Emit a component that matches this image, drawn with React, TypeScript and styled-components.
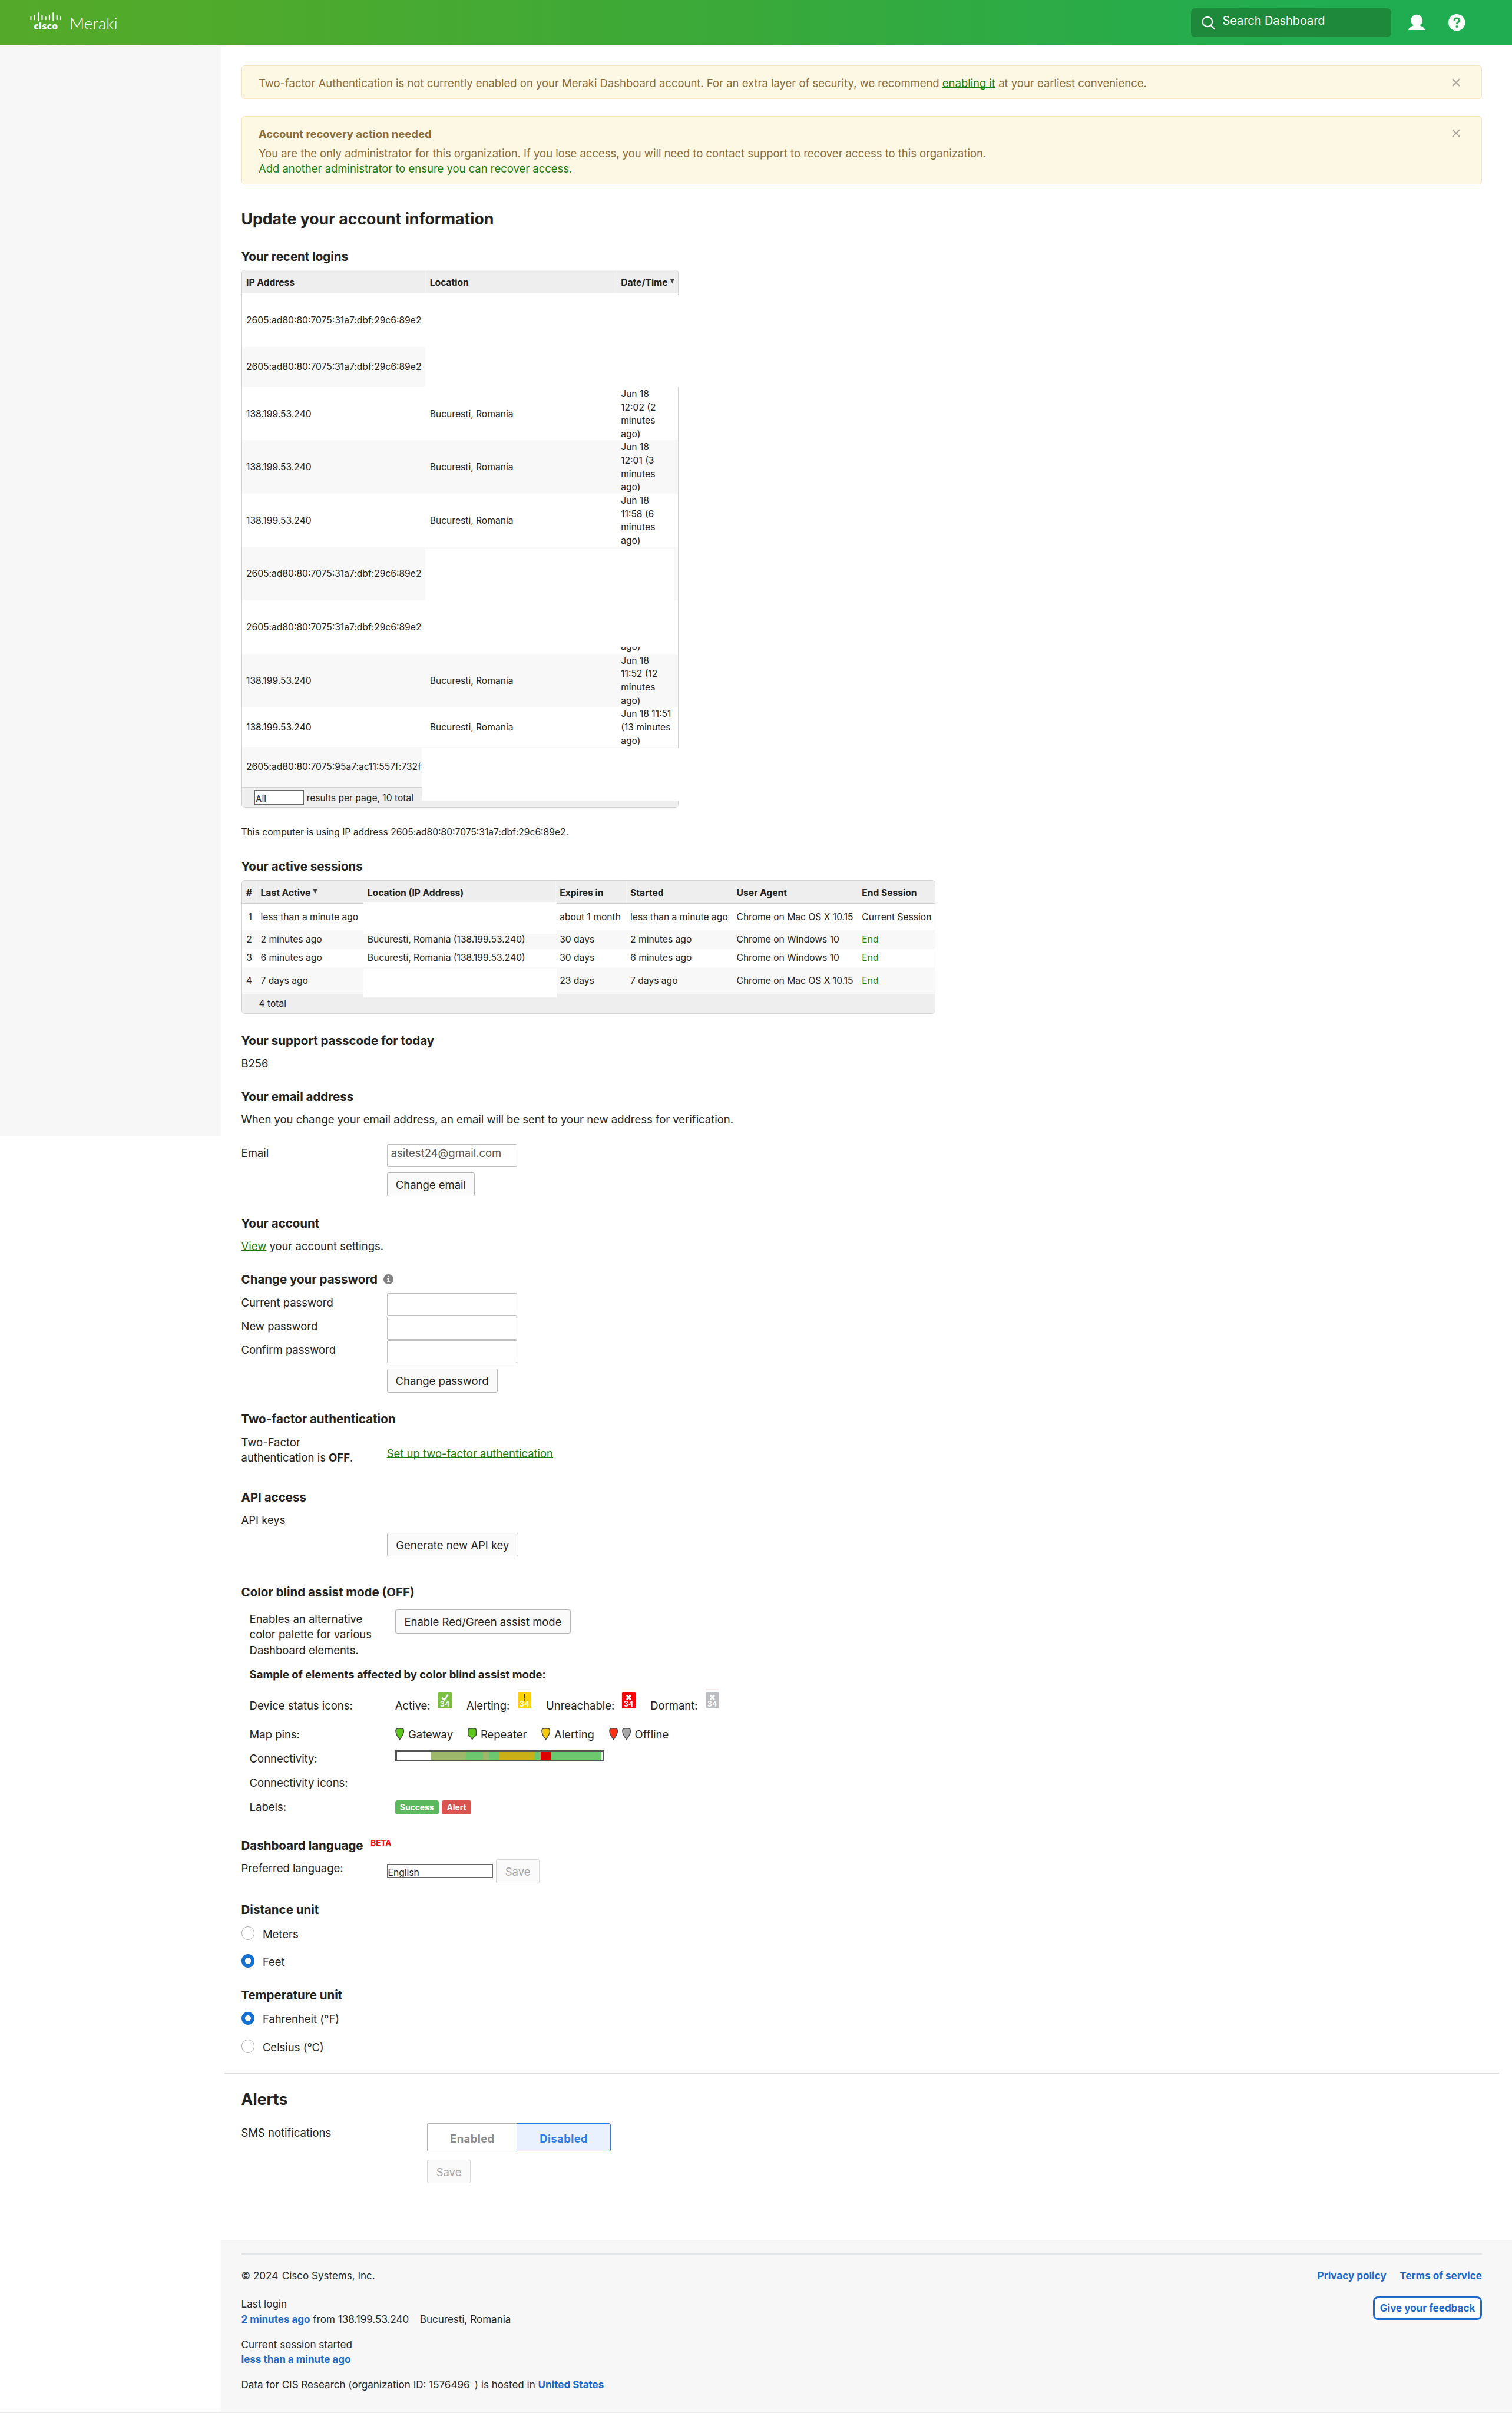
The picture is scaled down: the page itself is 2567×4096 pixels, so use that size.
import React from "react";
import styled, { createGlobalStyle, css } from "styled-components";

const SCALE = 2567 / 1807;
const u = (n: number) => `${+(n * SCALE).toFixed(3)}px`;

const INK = "#222222";
const LINK = "#1b7d0c";
const BLUE = "#1d69cc";

const GlobalStyle = createGlobalStyle`
  * { box-sizing: border-box; }
  html, body { margin: 0; padding: 0; background: #ffffff; }
  body {
    font-family: Inter, "Liberation Sans", sans-serif;
    font-size: ${u(13)};
    line-height: ${u(18.6)};
    color: ${INK};
    overflow: hidden;
  }
  h1, h2, h3, p { margin: 0; }
  button, input { font-family: inherit; margin: 0; outline: none; }
`;

const Page = styled.div`
  width: 2567px;
  height: 4096px;
  display: flex;
  flex-direction: column;
  overflow: hidden;
  border-bottom: 1px solid #ececec;
`;

/* ---------- top bar ---------- */

const TopBar = styled.header`
  height: ${u(54)};
  flex: none;
  display: flex;
  align-items: flex-start;
  justify-content: space-between;
  background: linear-gradient(90deg, #54a929 0%, #4faa2c 15%, #39a93a 50%, #20ad52 88%, #20ad52 100%);
  color: #ffffff;
`;

const Brand = styled.div`
  display: flex;
  padding-left: ${u(36)};
`;

const CiscoMark = styled.div`
  width: ${u(37.6)};
  margin-top: ${u(15)};
  display: flex;
  flex-direction: column;
  align-items: center;
  svg { display: block; width: ${u(37.6)}; height: ${u(10.6)}; }
`;

const CiscoWord = styled.span`
  font-family: "Open Sans", sans-serif;
  font-weight: 800;
  font-size: ${u(11)};
  line-height: ${u(12)};
  height: ${u(12)};
  margin-top: ${u(-0.3)};
  letter-spacing: ${u(0.2)};
`;

const MerakiWord = styled.span`
  font-family: Lato, sans-serif;
  font-weight: 300;
  font-size: ${u(19.6)};
  line-height: ${u(24)};
  margin-top: ${u(16.2)};
  margin-left: ${u(9.4)};
`;

const TopActions = styled.div`
  display: flex;
  padding-right: ${u(56)};
`;

const SearchBox = styled.div`
  width: ${u(240)};
  height: ${u(34)};
  margin-top: ${u(10)};
  border-radius: ${u(5)};
  background: #1f893b;
  display: flex;
  align-items: flex-start;
  svg { width: ${u(17)}; height: ${u(17)}; margin: ${u(9)} ${u(8)} 0 ${u(13)}; }
`;

const SearchText = styled.span`
  font-size: ${u(14)};
  line-height: ${u(20)};
  margin-top: ${u(5.1)};
`;

const TopIcon = styled.svg<{ $ml: number }>`
  width: ${u(20)};
  height: ${u(20)};
  margin-top: ${u(17)};
  margin-left: ${(p) => u(p.$ml)};
`;

/* ---------- frame ---------- */

const Body = styled.div`
  flex: 1;
  min-height: 0;
  display: flex;
  align-items: flex-start;
`;

const Sidebar = styled.aside`
  width: ${u(264)};
  height: ${u(1304)};
  flex: none;
  background: #f7f7f7;
`;

const Main = styled.main`
  flex: 1;
  min-width: 0;
  height: 100%;
  display: flex;
  flex-direction: column;
`;

const Content = styled.div`
  flex: none;
  padding: ${u(24.3)} ${u(36)} 0 ${u(24.3)};
  height: ${u(2622.7)};
`;

/* ---------- alerts ---------- */

const Alert = styled.div<{ $h: number; $mb?: number }>`
  height: ${(p) => u(p.$h)};
  margin-bottom: ${(p) => u(p.$mb ?? 0)};
  padding: ${u(11.2)} ${u(25)} 0 ${u(20)};
  border: 1px solid #f9e6c0;
  border-radius: ${u(4)};
  background: #fdf8e3;
  color: #8a6d3b;
  display: flex;
  justify-content: space-between;
  align-items: flex-start;
`;

const AlertTitle = styled.div`
  font-weight: 700;
  margin-bottom: ${u(4.5)};
`;

const Close = styled.svg`
  width: ${u(10)};
  height: ${u(10)};
  margin-top: ${u(3.6)};
`;

/* ---------- typography ---------- */

const Title = styled.h1<{ $mt: number }>`
  font-size: ${u(18.75)};
  line-height: ${u(25)};
  font-weight: 700;
  margin-top: ${(p) => u(p.$mt)};
`;

const Heading = styled.h3<{ $mt: number }>`
  display: flex;
  align-items: center;
  height: ${u(20)};
  padding-top: ${u(0.8)};
  font-size: ${u(14.43)};
  line-height: ${u(19.2)};
  font-weight: 700;
  margin-top: ${(p) => u(p.$mt)};
`;

const Text = styled.p<{ $mt?: number; $small?: boolean; $bold?: boolean }>`
  margin-top: ${(p) => u(p.$mt ?? 0)};
  white-space: nowrap;
  ${(p) => p.$small && css`font-size: ${u(11)}; line-height: ${u(16)};`}
  ${(p) => p.$bold && css`font-weight: 700;`}
`;

const Link = styled.a`
  color: ${LINK};
  text-decoration: underline;
  text-decoration-thickness: ${u(1)};
  text-underline-offset: 0px;
  text-decoration-skip-ink: none;
`;

const Beta = styled.span`
  color: #ff0000;
  font-size: ${u(9.5)};
  line-height: ${u(12)};
  margin: ${u(-6)} 0 0 ${u(9)};
`;

const InfoDot = styled.svg`
  width: ${u(12)};
  height: ${u(12)};
  margin-left: ${u(7.4)};
`;

/* ---------- tables ---------- */

const TableWrap = styled.div<{ $w: number; $mt: number }>`
  position: relative;
  width: ${(p) => u(p.$w)};
  margin-top: ${(p) => u(p.$mt)};
`;

const Table = styled.div`
  border: 1px solid #d2d2d2;
  border-radius: ${u(4)};
  overflow: hidden;
  font-size: ${u(11)};
  line-height: ${u(15.94)};
`;

const LOGIN_COLS = `${u(219.4)} ${u(228.4)} 1fr`;
const SESSION_COLS = `${u(17.2)} ${u(127.6)} ${u(229.8)} ${u(84.4)} ${u(127)} ${u(149.8)} 1fr`;

const Cell = styled.div<{ $end?: boolean; $bottom?: boolean; $line?: boolean }>`
  padding: ${u(0.8)} 0 0 ${u(5.3)};
  white-space: nowrap;
  ${(p) => p.$end && css`padding: ${u(0.8)} ${u(5)} 0 0; text-align: right;`}
  ${(p) => p.$bottom && css`align-self: end;`}
  ${(p) => p.$line && css`height: 100%; display: flex; align-items: center; border-left: 1px solid #f4f4f4; padding-left: ${u(4.6)};`}
`;

const Row = styled.div<{ $cols: string; $h: number; $alt?: boolean; $head?: boolean }>`
  display: grid;
  grid-template-columns: ${(p) => p.$cols};
  align-items: center;
  height: ${(p) => u(p.$h)};
  background: ${(p) => (p.$head ? "#eeeeee" : p.$alt ? "#f8f8f8" : "#ffffff")};
  ${(p) => p.$head && css`
    font-weight: 700;
    border-bottom: 1px solid #d2d2d2;
    ${Cell} { padding-top: ${u(2.6)}; }
  `}
`;

const Stamp = styled(Cell)`
  padding-top: ${u(0.8)};
  white-space: pre-line;
`;

const SortArrow = styled.i`
  width: ${u(5.2)};
  height: ${u(5.8)};
  background: #444444;
  clip-path: polygon(0 0, 100% 0, 50% 100%);
  margin: ${u(-4)} 0 0 ${u(2.8)};
`;

const TableFoot = styled.div<{ $h: number; $pl: number }>`
  display: flex;
  align-items: center;
  height: ${(p) => u(p.$h)};
  padding-left: ${(p) => u(p.$pl)};
  background: #eeeeee;
  border-top: 1px solid #d2d2d2;
`;

/* White block laid over table content. */
const Mask = styled.div<{ $x: number; $y: number; $w: number; $h: number }>`
  position: absolute;
  left: ${(p) => u(p.$x)};
  top: ${(p) => u(p.$y)};
  width: ${(p) => u(p.$w)};
  height: ${(p) => u(p.$h)};
  background: #ffffff;
`;

/* ---------- form parts ---------- */

const FormRow = styled.div<{ $mt?: number; $indent?: boolean; $h?: number }>`
  display: grid;
  grid-template-columns: ${u(174)} 1fr;
  align-items: start;
  margin-top: ${(p) => u(p.$mt ?? 0)};
  padding-left: ${(p) => u(p.$indent ? 9.9 : 0)};
  ${(p) => p.$h && css`height: ${u(p.$h)};`}
`;

const AlertsRow = styled(FormRow)`
  grid-template-columns: ${u(222.3)} 1fr;
`;

const Label = styled.div<{ $pt?: number }>`
  padding-top: ${(p) => u(p.$pt ?? 0)};
  white-space: pre-line;
`;

const Control = styled.div<{ $pt?: number }>`
  display: flex;
  align-items: flex-start;
  padding-top: ${(p) => u(p.$pt ?? 0)};
`;

const Input = styled.input`
  width: ${u(155.8)};
  height: ${u(27.6)};
  padding: 0 ${u(4.2)} ${u(7.4)};
  border: 1px solid #bfbfbf;
  border-radius: ${u(1.5)};
  background: #ffffff;
  color: #555555;
  font-size: ${u(13)};
`;

const Button = styled.button<{ $w: number; $mt?: number; $ml?: number; $off?: boolean }>`
  display: block;
  width: ${(p) => u(p.$w)};
  height: ${u(28.7)};
  margin-top: ${(p) => u(p.$mt ?? 0)};
  margin-left: ${(p) => u(p.$ml ?? 0)};
  padding: ${u(1.4)} 0 0;
  border: 1px solid ${(p) => (p.$off ? "#dadada" : "#b8b8b8")};
  border-radius: ${u(2)};
  background: #fafafa;
  color: ${(p) => (p.$off ? "#a3a3a3" : INK)};
  font-size: ${u(13)};
  line-height: ${u(18.6)};
  white-space: nowrap;
`;

const Select = styled.div<{ $w: number; $mt?: number }>`
  width: ${(p) => u(p.$w)};
  height: ${u(17.2)};
  margin-top: ${(p) => u(p.$mt ?? 0)};
  padding: ${u(2.7)} 0 0 ${u(0.6)};
  overflow: hidden;
  border: 1px solid #686868;
  background: #ffffff;
  font-size: ${u(11)};
  line-height: ${u(16)};
`;

const FootText = styled.span`
  margin-left: ${u(3.6)};
  padding-top: ${u(1.8)};
`;

const RadioRow = styled.label<{ $mt: number }>`
  display: flex;
  align-items: center;
  height: ${u(16)};
  margin-top: ${(p) => u(p.$mt)};
  span { padding-top: ${u(1.8)}; }
`;

const RadioDot = styled.i<{ $on?: boolean }>`
  width: ${u(16)};
  height: ${u(16)};
  margin-right: ${u(9.6)};
  border-radius: 50%;
  background: #ffffff;
  border: ${(p) => (p.$on ? "6px solid #1470d2" : "1px solid #ababab")};
`;

const Divider = styled.div`
  height: ${u(1.2)};
  margin: ${u(23.8)} ${u(-20.3)} 0 ${u(-20.3)};
  background: #dcdcdc;
`;

const Toggle = styled.div`
  display: flex;
  width: ${u(219.4)};
  height: ${u(33.8)};
`;

const ToggleOption = styled.div<{ $w: number; $on?: boolean }>`
  width: ${(p) => u(p.$w)};
  display: flex;
  align-items: center;
  justify-content: center;
  padding-top: ${u(2.6)};
  font-weight: 700;
  letter-spacing: ${u(0.3)};
  border: 1px solid ${(p) => (p.$on ? "#2b7be9" : "#b0b0b0")};
  ${(p) => !p.$on && css`border-right: none;`}
  border-radius: ${(p) => (p.$on ? `0 ${u(2)} ${u(2)} 0` : `${u(2)} 0 0 ${u(2)}`)};
  background: ${(p) => (p.$on ? "#e9f1fe" : "#ffffff")};
  color: ${(p) => (p.$on ? "#2b7be9" : "#8a8a8a")};
`;

/* ---------- colour samples ---------- */

const StatusItem = styled.div<{ $w: number }>`
  display: flex;
  justify-content: space-between;
  align-items: flex-start;
  width: ${(p) => u(p.$w)};
  margin-right: ${u(18)};
`;

const StatusTile = styled.div<{ $bg: string; $edge?: string }>`
  width: ${u(16)};
  height: ${u(19.2)};
  margin-top: ${u(-7)};
  border-radius: ${u(1)} ${u(1)} 0 0;
  background: ${(p) => p.$bg};
  box-shadow: 0 ${u(-2.4)} 0 0 #ffffff, 0 ${u(-3.1)} 0 0 ${(p) => p.$edge ?? "#ffffff"};
  display: flex;
  flex-direction: column;
  align-items: center;
  svg { width: ${u(9)}; height: ${u(9)}; margin-top: ${u(1.9)}; flex: none; }
`;

const TileCount = styled.span`
  font-size: ${u(9)};
  line-height: ${u(8.2)};
  height: ${u(8.2)};
  color: #ffffff;
  font-weight: 600;
`;

const PinItem = styled.div<{ $w: number }>`
  display: flex;
  width: ${(p) => u(p.$w)};
  white-space: nowrap;
  svg { flex: none; width: ${u(10.8)}; height: ${u(14.6)}; margin: ${u(1.4)} ${u(4.5)} 0 ${u(0.4)}; }
`;

const Bar = styled.div`
  display: flex;
  width: ${u(250)};
  height: ${u(13)};
  margin-top: ${u(-0.5)};
  border: 3px solid #555555;
  background: #ffffff;
`;

const Segment = styled.i<{ $w: number; $c: string }>`
  width: ${(p) => u(p.$w)};
  background: ${(p) => p.$c};
`;

const Tag = styled.span<{ $bg: string; $w: number }>`
  width: ${(p) => u(p.$w)};
  height: ${u(16.8)};
  margin: ${u(1.2)} ${u(3.9)} 0 0;
  border-radius: ${u(2.6)};
  background: ${(p) => p.$bg};
  color: #ffffff;
  font-size: ${u(9.75)};
  line-height: ${u(17)};
  font-weight: 700;
  text-align: center;
`;

/* ---------- footer ---------- */

const Footer = styled.footer`
  flex: 1;
  background: #f7f7f7;
  padding: ${u(15.8)} ${u(36)} 0 ${u(24.3)};
  font-size: ${u(12)};
  line-height: ${u(18)};
  color: #23282e;
`;

const FooterInner = styled.div`
  display: flex;
  justify-content: space-between;
  align-items: flex-start;
  border-top: 2px solid #e1e5e9;
  padding-top: ${u(16.4)};
`;

const FooterLine = styled.div<{ $mt?: number }>`
  margin-top: ${(p) => u(p.$mt ?? 0)};
  white-space: pre;
  b { color: ${BLUE}; font-weight: 700; }
`;

const Gap = styled.span<{ $w: number }>`
  display: inline-block;
  width: ${(p) => u(p.$w)};
`;

const FooterLinks = styled.div`
  display: flex;
  flex-direction: column;
  align-items: flex-end;
`;

const PolicyLinks = styled.div`
  display: flex;
  gap: ${u(16)};
  color: ${BLUE};
  font-weight: 700;
`;

const Feedback = styled.button`
  width: ${u(130)};
  height: ${u(28.2)};
  margin-top: ${u(15.4)};
  padding: ${u(0.8)} 0 0;
  border: 3px solid ${BLUE};
  border-radius: ${u(6)};
  background: #ffffff;
  color: ${BLUE};
  font-weight: 700;
  font-size: ${u(12)};
  line-height: ${u(18)};
  white-space: nowrap;
`;

/* ---------- data ---------- */

const V6 = "2605:ad80:80:7075:31a7:dbf:29c6:89e2";
const V4 = "138.199.53.240";
const CITY = "Bucuresti, Romania";

const logins = [
  { ip: V6, lines: 4 },
  { ip: V6, lines: 3 },
  { ip: V4, lines: 4, city: CITY, time: "Jun 18\n12:02 (2\nminutes\nago)" },
  { ip: V4, lines: 4, city: CITY, time: "Jun 18\n12:01 (3\nminutes\nago)" },
  { ip: V4, lines: 4, city: CITY, time: "Jun 18\n11:58 (6\nminutes\nago)" },
  { ip: V6, lines: 4 },
  { ip: V6, lines: 4, time: "ago)" },
  { ip: V4, lines: 4, city: CITY, time: "Jun 18\n11:52 (12\nminutes\nago)" },
  { ip: V4, lines: 3, city: CITY, time: "Jun 18 11:51\n(13 minutes\nago)" },
  { ip: "2605:ad80:80:7075:95a7:ac11:557f:732f", lines: 3 },
];

const sessions = [
  { h: 32, active: "less than a minute ago", where: "", exp: "about 1 month", start: "less than a minute ago", ua: "Chrome on Mac OS X 10.15", current: true },
  { h: 22, active: "2 minutes ago", where: `${CITY} (${V4})`, exp: "30 days", start: "2 minutes ago", ua: "Chrome on Windows 10" },
  { h: 22, active: "6 minutes ago", where: `${CITY} (${V4})`, exp: "30 days", start: "6 minutes ago", ua: "Chrome on Windows 10" },
  { h: 32, active: "7 days ago", where: "", exp: "23 days", start: "7 days ago", ua: "Chrome on Mac OS X 10.15" },
];

const GREEN = "#6dc76f";
const OLIVE = "#9db86a";
const segments: [number, string][] = [
  [41, "#ffffff"], [41.3, OLIVE], [20.3, GREEN], [7.6, OLIVE], [12, GREEN],
  [42.4, "#c9b018"], [7.4, GREEN], [12.2, "#dc0000"], [60.6, GREEN],
];

/* ---------- small drawings ---------- */

const bars: [number, number, number][] = [
  [1, 5.6, 3], [5.4, 3.6, 5], [9.9, 0.8, 9], [14.4, 3.6, 5], [18.8, 5.6, 3],
  [23.2, 3.6, 5], [27.7, 0.8, 9], [32.2, 3.6, 5], [36.6, 5.6, 3],
];

const CloseIcon = () => (
  <Close viewBox="0 0 10 10">
    <path d="M0.8 0.8 9.2 9.2M9.2 0.8 0.8 9.2" stroke="#a9a69c" strokeWidth="1.5" fill="none" />
  </Close>
);

const CrossIcon = () => (
  <svg viewBox="0 0 9 9">
    <path d="M2 1.8 7 7.2M7 1.8 2 7.2" stroke="#ffffff" strokeWidth="2.2" />
  </svg>
);

const Pin = ({ fill, speech }: { fill: string; speech?: boolean }) => (
  <svg viewBox="0 0 10.8 14.4">
    <path
      d={
        speech
          ? "M2.6 0.6H8.2Q10.2 1 10.2 3V8Q10 9.6 7.4 10.8L5.4 13.8 3.4 10.8Q0.8 9.6 0.6 8V3Q0.6 1 2.6 0.6Z"
          : "M2.6 0.6H8.2Q10.2 1 10.2 3.4C10.2 7.6 7.6 11 5.4 13.8C3.2 11 0.6 7.6 0.6 3.4Q0.6 1 2.6 0.6Z"
      }
      fill={fill}
      stroke="#4a4a4a"
      strokeWidth="1"
    />
  </svg>
);

export default function App() {
  return (
    <Page>
      <GlobalStyle />
      <TopBar>
        <Brand>
          <CiscoMark>
            <svg viewBox="0 0 37.6 10.6">
              {bars.map(([x, y, h]) => (
                <line key={x} x1={x} x2={x} y1={y} y2={y + h} stroke="#ffffff" strokeWidth="1.5" strokeLinecap="round" />
              ))}
            </svg>
            <CiscoWord>cisco</CiscoWord>
          </CiscoMark>
          <MerakiWord>Meraki</MerakiWord>
        </Brand>
        <TopActions>
          <SearchBox>
            <svg viewBox="0 0 17 17" fill="none" stroke="#ffffff" strokeWidth="1.5" strokeLinecap="round">
              <circle cx="7" cy="7" r="5.8" />
              <path d="M11.2 11.4 15.6 15.8" />
            </svg>
            <SearchText>Search Dashboard</SearchText>
          </SearchBox>
          <TopIcon $ml={20} viewBox="0 0 20 20">
            <path
              d="M10 0.5C14 0.5 17 3.6 17 7.6C17 10.4 15.4 12.4 13.2 13.2C14.5 14.2 18.6 14.4 20 19H0C1.4 14.4 5.5 14.2 6.8 13.2C4.6 12.4 3 10.4 3 7.6C3 3.6 6 0.5 10 0.5Z"
              fill="#ffffff"
            />
          </TopIcon>
          <TopIcon $ml={28} viewBox="0 0 20 20">
            <circle cx="10" cy="10" r="10" fill="#ffffff" />
            <path d="M7 7.6Q7.2 4.9 10 4.9Q13 4.9 13 7.4Q13 9 11.3 9.8Q10.1 10.4 10.1 12" fill="none" stroke="#22a94e" strokeWidth="2.2" />
            <circle cx="10.1" cy="14.8" r="1.4" fill="#22a94e" />
          </TopIcon>
        </TopActions>
      </TopBar>
      <Body>
        <Sidebar />
        <Main>
          <Content>
            <Alert $h={40} $mb={20.3}>
              <div>
                Two-factor Authentication is not currently enabled on your Meraki Dashboard account. For an extra layer of
                security, we recommend <Link>enabling it</Link> at your earliest convenience.
              </div>
              <CloseIcon />
            </Alert>
            <Alert $h={81.8}>
              <div>
                <AlertTitle>Account recovery action needed</AlertTitle>
                <div>
                  You are the only administrator for this organization. If you lose access, you will need to contact support
                  to recover access to this organization.
                </div>
                <Link>Add another administrator to ensure you can recover access.</Link>
              </div>
              <CloseIcon />
            </Alert>

            <Title $mt={28.6}>Update your account information</Title>

            <Heading $mt={22}>Your recent logins</Heading>
            <TableWrap $w={522.6} $mt={6.5}>
              <Table>
                <Row $head $h={27.6} $cols={LOGIN_COLS}>
                  <Cell>IP Address</Cell>
                  <Cell $line>Location</Cell>
                  <Cell $line>
                    Date/Time
                    <SortArrow />
                  </Cell>
                </Row>
                {logins.map((r, i) => (
                  <Row key={i} $h={r.lines * 15.94} $alt={i % 2 === 1} $cols={LOGIN_COLS}>
                    <Cell>{r.ip}</Cell>
                    <Cell>{r.city}</Cell>
                    <Stamp $bottom={r.time === "ago)"}>{r.time}</Stamp>
                  </Row>
                ))}
                <TableFoot $h={24.2} $pl={15}>
                  <Select $w={58.9}>All</Select>
                  <FootText>results per page, 10 total</FootText>
                </TableFoot>
              </Table>
              <Mask $x={219.6} $y={30.2} $w={306} $h={110} />
              <Mask $x={219.6} $y={333.6} $w={298.4} $h={116.6} />
              <Mask $x={215.6} $y={571.2} $w={310} $h={62.8} />
            </TableWrap>
            <Text $small $mt={21.6}>
              This computer is using IP address {V6}.
            </Text>

            <Heading $mt={21.9}>Your active sessions</Heading>
            <TableWrap $w={829.7} $mt={7}>
              <Table>
                <Row $head $h={27.2} $cols={SESSION_COLS}>
                  <Cell $end>#</Cell>
                  <Cell $line>
                    Last Active
                    <SortArrow />
                  </Cell>
                  <Cell $line>Location (IP Address)</Cell>
                  <Cell $line>Expires in</Cell>
                  <Cell $line>Started</Cell>
                  <Cell>User Agent</Cell>
                  <Cell>End Session</Cell>
                </Row>
                {sessions.map((s, i) => (
                  <Row key={i} $h={s.h} $alt={i % 2 === 1} $cols={SESSION_COLS}>
                    <Cell $end>{i + 1}</Cell>
                    <Cell>{s.active}</Cell>
                    <Cell>{s.where}</Cell>
                    <Cell>{s.exp}</Cell>
                    <Cell>{s.start}</Cell>
                    <Cell>{s.ua}</Cell>
                    <Cell>{s.current ? "Current Session" : <Link>End</Link>}</Cell>
                  </Row>
                ))}
                <TableFoot $h={22.8} $pl={20.4}>4 total</TableFoot>
              </Table>
              <Mask $x={146.2} $y={25.8} $w={231} $h={38.4} />
              <Mask $x={145.8} $y={106} $w={231} $h={34.2} />
            </TableWrap>

            <Heading $mt={22.2}>Your support passcode for today</Heading>
            <Text $mt={8}>B256</Text>

            <Heading $mt={20.4}>Your email address</Heading>
            <Text $mt={8}>
              When you change your email address, an email will be sent to your new address for verification.
            </Text>
            <FormRow $mt={20.2} $h={62.4}>
              <Label $pt={1.2}>Email</Label>
              <div>
                <Control>
                  <Input readOnly value="asitest24@gmail.com" />
                </Control>
                <Button $w={105.2} $mt={6.2}>Change email</Button>
              </div>
            </FormRow>

            <Heading $mt={21.9}>Your account</Heading>
            <Text $mt={8.3}>
              <Link>View</Link> your account settings.
            </Text>

            <Heading $mt={20}>
              Change your password
              <InfoDot viewBox="0 0 12 12">
                <circle cx="6" cy="6" r="6" fill="#808080" />
                <path d="M5 2H7V3.6H5ZM4.4 4.9H7.1V8.6H8V9.8H4.2V8.6H5.2V6H4.4Z" fill="#ffffff" />
              </InfoDot>
            </Heading>
            {["Current password", "New password", "Confirm password"].map((t, i) => (
              <FormRow key={t} $mt={i === 0 ? 6.7 : 0} $h={28.25}>
                <Label $pt={2}>{t}</Label>
                <Control>
                  <Input readOnly value="" />
                </Control>
              </FormRow>
            ))}
            <FormRow $mt={5.3} $h={28.6}>
              <Label />
              <Button $w={132.2}>Change password</Button>
            </FormRow>

            <Heading $mt={21.8}>Two-factor authentication</Heading>
            <FormRow $mt={8.5} $h={37.4}>
              <Label>
                Two-Factor{"\n"}authentication is <strong>OFF</strong>.
              </Label>
              <Control $pt={13.2}>
                <Link>Set up two-factor authentication</Link>
              </Control>
            </FormRow>

            <Heading $mt={27.5}>API access</Heading>
            <Text $mt={8.1}>API keys</Text>
            <FormRow $mt={5.9} $h={28.6}>
              <Label />
              <Button $w={157.2}>Generate new API key</Button>
            </FormRow>

            <Heading $mt={31.8}>Color blind assist mode (OFF)</Heading>
            <FormRow $indent $mt={11.3} $h={57.6}>
              <Label $pt={1.9}>{"Enables an alternative\ncolor palette for various\nDashboard elements."}</Label>
              <Button $w={210}>Enable Red/Green assist mode</Button>
            </FormRow>
            <FormRow $indent $mt={10.8} $h={18.6}>
              <Text $bold>Sample of elements affected by color blind assist mode:</Text>
            </FormRow>
            <FormRow $indent $mt={18.6} $h={18.6}>
              <Label>Device status icons:</Label>
              <Control>
                <StatusItem $w={67.4}>
                  Active:
                  <StatusTile $bg="#7ac142">
                    <svg viewBox="0 0 9 9">
                      <path d="M0.8 4.8 3.5 7.4 8.2 1.4" stroke="#ffffff" strokeWidth="2" fill="none" />
                    </svg>
                    <TileCount>34</TileCount>
                  </StatusTile>
                </StatusItem>
                <StatusItem $w={77}>
                  Alerting:
                  <StatusTile $bg="#ffd200" $edge="#e6efdc">
                    <svg viewBox="0 0 9 9">
                      <path d="M3.5 0.2H5.5L5 5.8H4ZM3.7 6.6H5.3V8.2H3.7Z" fill="#4a3a08" />
                    </svg>
                    <TileCount>34</TileCount>
                  </StatusTile>
                </StatusItem>
                <StatusItem $w={106.7}>
                  Unreachable:
                  <StatusTile $bg="#fb0007" $edge="#fdf5d2">
                    <CrossIcon />
                    <TileCount>34</TileCount>
                  </StatusTile>
                </StatusItem>
                <StatusItem $w={81.9}>
                  Dormant:
                  <StatusTile $bg="#bcbdc0" $edge="#fbd5d6">
                    <CrossIcon />
                    <TileCount>34</TileCount>
                  </StatusTile>
                </StatusItem>
              </Control>
            </FormRow>
            <FormRow $indent $mt={15.9} $h={18.6}>
              <Label>Map pins:</Label>
              <Control>
                <PinItem $w={86.5}><Pin fill="#5bc716" />Gateway</PinItem>
                <PinItem $w={88}><Pin fill="#5bc716" speech />Repeater</PinItem>
                <PinItem $w={80.6}><Pin fill="#f6c90f" />Alerting</PinItem>
                <PinItem $w={15.6}><Pin fill="#ff3214" /></PinItem>
                <PinItem $w={70}><Pin fill="#a8a8a8" />Offline</PinItem>
              </Control>
            </FormRow>
            <FormRow $indent $mt={10.2} $h={18.6}>
              <Label>Connectivity:</Label>
              <Bar>
                {segments.map(([w, c], i) => (
                  <Segment key={i} $w={w} $c={c} />
                ))}
              </Bar>
            </FormRow>
            <FormRow $indent $mt={10.7} $h={18.6}>
              <Label>Connectivity icons:</Label>
            </FormRow>
            <FormRow $indent $mt={10} $h={18.6}>
              <Label>Labels:</Label>
              <Control>
                <Tag $bg="#5cb85c" $w={52}>Success</Tag>
                <Tag $bg="#d9534f" $w={35.2}>Alert</Tag>
              </Control>
            </FormRow>

            <Heading $mt={26.3}>
              Dashboard language <Beta>BETA</Beta>
            </Heading>
            <FormRow $mt={6.8} $h={28.7}>
              <Label $pt={1.3}>Preferred language:</Label>
              <Control>
                <Select $w={126.9} $mt={5.4}>English</Select>
                <Button $off $w={51.7} $ml={3.8}>Save</Button>
              </Control>
            </FormRow>

            <Heading $mt={21.5}>Distance unit</Heading>
            <RadioRow $mt={10.2}><RadioDot /><span>Meters</span></RadioRow>
            <RadioRow $mt={17.1}><RadioDot $on /><span>Feet</span></RadioRow>

            <Heading $mt={22.8}>Temperature unit</Heading>
            <RadioRow $mt={9.9}><RadioDot $on /><span>Fahrenheit (°F)</span></RadioRow>
            <RadioRow $mt={17.4}><RadioDot /><span>Celsius (°C)</span></RadioRow>

            <Divider />

            <Title $mt={18.3}>Alerts</Title>
            <AlertsRow $mt={15.7}>
              <Label $pt={1.8}>SMS notifications</Label>
              <div>
                <Toggle>
                  <ToggleOption $w={107}>Enabled</ToggleOption>
                  <ToggleOption $on $w={112.4}>Disabled</ToggleOption>
                </Toggle>
                <Button $off $w={51.7} $mt={9.5}>Save</Button>
              </div>
            </AlertsRow>
          </Content>

          <Footer>
            <FooterInner>
              <div>
                <FooterLine>© 2024<Gap $w={4.6} />Cisco Systems, Inc.</FooterLine>
                <FooterLine $mt={15.8}>Last login</FooterLine>
                <FooterLine><b>2 minutes ago</b> from {V4}<Gap $w={13} />{CITY}</FooterLine>
                <FooterLine $mt={12.2}>Current session started</FooterLine>
                <FooterLine><b>less than a minute ago</b></FooterLine>
                <FooterLine $mt={12.4}>
                  Data for CIS Research (organization ID: 1576496<Gap $w={5.8} />) is hosted in <b>United States</b>
                </FooterLine>
              </div>
              <FooterLinks>
                <PolicyLinks>
                  <span>Privacy policy</span>
                  <span>Terms of service</span>
                </PolicyLinks>
                <Feedback>Give your feedback</Feedback>
              </FooterLinks>
            </FooterInner>
          </Footer>
        </Main>
      </Body>
    </Page>
  );
}
